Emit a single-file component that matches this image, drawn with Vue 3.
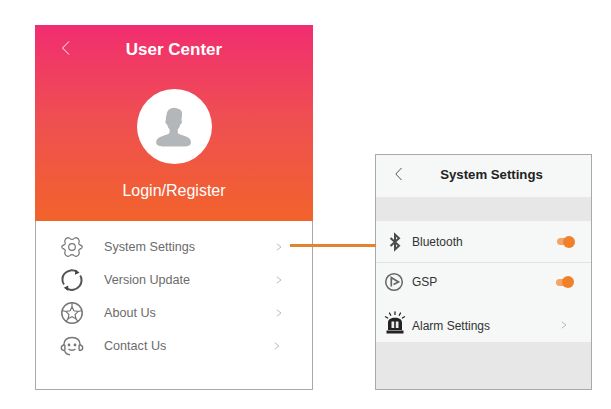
<template>
  <div class="page">
    <section class="user-panel">
      <header class="hero">
        <div class="hero-top">
          <svg class="back" width="11" height="16" viewBox="0 0 11 16"><path d="M9 1.500 2.500 8 9 14.500" /></svg>
          <span class="hero-title">User Center</span>
        </div>
        <div class="avatar">
          <svg width="36" height="40" viewBox="0 0 36 40">
            <path d="M10.500 9C10.500 3.500 14 .8 18.500.8c2.200 0 3 .9 4.300 1.200 2.700.7 3.500 3 3.200 6.500-.2 2-.3 3.300-.6 4.800.8.300.7 1.700.2 3-.4 1-.9 1-1.300 1.100-.6 2.200-1.500 3.800-2.500 5v3.100c0 1.300 3.700 2.500 7.500 3.800 3.200 1.100 5.700 2.900 5.700 6 0 3-2.500 4.100-6 4.100H6.500C3 39.400.2 38.300.2 35.300c0-3.100 2.600-4.900 5.800-6 3.800-1.300 7.600-2.500 7.600-3.800v-3.100c-1-1.200-1.900-2.800-2.500-5-.5-.1-1-.1-1.400-1.100-.5-1.300-.6-2.700.2-3-.2-1.300.1-2.900.1-4.300Z" />
          </svg>
        </div>
        <div class="login">Login/Register</div>
      </header>
      <ul class="menu">
        <li v-for="item in menu" :key="item.label" class="menu-row" :style="{ height: item.height + 'px' }">
          <svg class="menu-icon" width="24" height="24" viewBox="0 0 24 24" fill="none" stroke="#767676" stroke-width="1.200">
            <template v-if="item.icon === 'gear'">
              <path d="M7.800 2.600c1.300-.4 2.400 1.800 4.200 1.800s2.900-2.200 4.200-1.800c1.500.4 2.700 1.700 3 3.100.3 1.400-.9 2.100-.3 3.400.6 1.200 3.400 1.100 3.400 2.900s-2.800 1.700-3.400 2.900c-.6 1.300.6 2 .3 3.400-.3 1.400-1.500 2.700-3 3.100-1.300.4-2.400-1.800-4.200-1.800s-2.900 2.200-4.200 1.800c-1.500-.4-2.700-1.700-3-3.100-.3-1.400.9-2.100.3-3.400-.6-1.200-3.400-1.100-3.400-2.900s2.800-1.700 3.400-2.900c.6-1.300-.6-2-.3-3.400.3-1.400 1.500-2.700 3-3.100Z" />
              <circle cx="12" cy="12" r="3.300" />
            </template>
            <template v-else-if="item.icon === 'refresh'">
              <path stroke="#555" stroke-width="2" d="M17 3.800A10 10 0 0 0 4.500 5.600C2 8.300 1.600 13.300 4 16.500" />
              <path stroke="#555" stroke-width="2" d="M6.500 20.400a10 10 0 0 0 13-2.200c2.500-3 2.700-7.700.7-10.700" />
              <path fill="#444" stroke="none" d="m15.500 1.500 4 3.200-4.600 2.100ZM8 22.800l-4.200-3 4.500-2.300Z" />
            </template>
            <template v-else-if="item.icon === 'star'">
              <circle cx="12" cy="12" r="10.200" stroke-width="1.500" />
              <path d="m12 5.800 1.900 4 4.300.6-3.100 3 .8 4.300-3.900-2.100-3.900 2.100.8-4.300-3.100-3 4.300-.6Z" />
              <path d="M12 1.800v4M21.800 9.500l-3.600 1M17.900 20.300l-2-2.600M6.100 20.300l2-2.600M2.200 9.500l3.600 1" />
            </template>
            <template v-else>
              <path stroke-width="1.400" d="M3.800 11C4 6 7.500 3.500 12 3.500s8 2.500 8.200 7.500" />
              <path stroke-width="1.400" d="M3.800 11c-1.700.4-2.500 1.400-2.500 2.800s1 2.600 2.700 2.700c.7 0 .9-.5.9-1.100v-3.500c0-.7-.4-1.100-1.100-.9ZM20.200 11c1.700.4 2.500 1.400 2.500 2.800s-1 2.600-2.700 2.700c-.7 0-.9-.5-.9-1.100v-3.500c0-.7.400-1.100 1.100-.9Z" />
              <path stroke-width="1.400" d="M4.800 16.800c.5 2.400 2.600 3.700 5.200 3.900" />
              <circle cx="9" cy="11" r=".8" fill="#767676" />
              <circle cx="15" cy="11" r=".8" fill="#767676" />
              <path stroke-width="1.400" d="M8.500 15c1.800 1.700 5.200 1.700 7 0" />
            </template>
          </svg>
          <span class="menu-label">{{ item.label }}</span>
          <svg class="chevron" :class="{ 'shift-left': item.icon === 'headset' }" width="6" height="8" viewBox="0 0 6 8"><path d="M.8.8 5 4 .8 7.200" /></svg>
        </li>
      </ul>
    </section>

    <div class="connector"></div>

    <section class="settings-panel">
      <header class="settings-top">
        <svg class="back dark" width="10" height="14" viewBox="0 0 10 14"><path d="M7.500 1 1.800 7l5.700 6" /></svg>
        <span class="settings-title">System Settings</span>
      </header>
      <div class="band"></div>
      <div class="set-row first">
        <svg class="set-icon" width="22" height="22" viewBox="0 0 22 22" fill="none" stroke="#4b4b4b" stroke-width="2">
          <path d="M6.500 7 15 14.800 11 18.500V3.500L15 7.200 6.500 15" />
        </svg>
        <span class="set-label">Bluetooth</span>
        <span class="switch"></span>
      </div>
      <div class="set-row second">
        <svg class="set-icon" width="22" height="22" viewBox="0 0 22 22" fill="none" stroke="#666" stroke-width="1.500">
          <circle cx="10" cy="11" r="8.300" />
          <path stroke-width="1.700" d="M7.300 15.500v-9l7.200 4.500-5 2.500" />
        </svg>
        <span class="set-label">GSP</span>
        <span class="switch gsp"></span>
      </div>
      <div class="set-row third">
        <svg class="set-icon alarm-icon" width="22" height="24" viewBox="0 0 22 24">
          <path fill="#222" d="M4 11.500C4 8.300 7 6.700 11 6.700s7 1.600 7 4.800V19H4ZM2.500 19.500h17v3h-17Z" />
          <path fill="#eee" d="M7.500 10.500h2.700v6.500H7.500ZM11.800 10.500h2.700v6.500h-2.700Z" />
          <path fill="none" stroke="#222" stroke-width="1.300" stroke-linecap="round" d="M11 .8v2.600M5.500 2l1.200 2.200M16.500 2l-1.200 2.200M1.500 5.800l2.200 1.200M20.500 5.800 18.300 7" />
        </svg>
        <span class="set-label">Alarm Settings</span>
        <svg class="chevron alarm" width="6" height="8" viewBox="0 0 6 8"><path d="M.8.8 5 4 .8 7.200" /></svg>
      </div>
      <div class="footer-band"></div>
    </section>
  </div>
</template>

<script setup>
const menu = [
  { icon: 'gear', label: 'System Settings', height: 33 },
  { icon: 'refresh', label: 'Version Update', height: 33 },
  { icon: 'star', label: 'About Us', height: 34 },
  { icon: 'headset', label: 'Contact Us', height: 32 }
]
</script>

<style>
html, body {
  background: #fff;
}
</style>

<style scoped>
.page {
  position: relative;
  display: flex;
  align-items: flex-start;
  width: 611px;
  height: 409px;
  padding: 25px 0 0 35px;
  box-sizing: border-box;
  overflow: hidden;
  background: #fff;
  font-family: "Liberation Sans", Arial, sans-serif;
}

.user-panel {
  width: 278px;
  height: 365px;
  box-sizing: border-box;
  border: 1px solid #a9a9a9;
  border-top: 0;
  display: flex;
  flex-direction: column;
}

.hero {
  margin: 0 -1px;
  height: 196px;
  flex-shrink: 0;
  display: flex;
  flex-direction: column;
  align-items: center;
  background: linear-gradient(180deg, #f12d70 0%, #ef5050 50%, #f2632b 100%);
  color: #fff;
}

.hero-top {
  position: relative;
  width: 100%;
  height: 48px;
  padding-top: 2px;
  box-sizing: border-box;
  display: flex;
  align-items: center;
  justify-content: center;
}

.hero-title {
  font-size: 17px;
  font-weight: 700;
}

.back {
  position: absolute;
  left: 25px;
  top: 15px;
  fill: none;
  stroke: #fff;
  stroke-width: 1;
}

.back.dark {
  left: 18px;
  top: 12px;
  stroke: #555;
}

.avatar {
  width: 75px;
  height: 75px;
  margin-top: 16px;
  border-radius: 50%;
  background: #fff;
  display: flex;
  align-items: center;
  justify-content: center;
}

.avatar svg {
  fill: #b4b7ba;
}

.login {
  margin-top: 17px;
  font-size: 16px;
  line-height: 20px;
}

.menu {
  list-style: none;
  margin: 0;
  padding: 9px 0 0 24px;
}

.menu-row {
  display: flex;
  align-items: center;
}

.menu-icon {
  flex-shrink: 0;
}

.menu-label {
  margin-left: 20px;
  width: 172px;
  font-size: 12.600px;
  color: #6b6b6b;
}

.chevron {
  fill: none;
  stroke: #aaa;
  stroke-width: 0.800;
}

.chevron.shift-left {
  margin-left: -2px;
}

.connector {
  position: absolute;
  left: 290px;
  top: 244px;
  width: 86px;
  height: 3px;
  background: #e2842f;
}

.settings-panel {
  width: 217px;
  height: 236px;
  margin: 129px 0 0 62px;
  box-sizing: border-box;
  border: 1px solid #a9a9a9;
  background: #f6f7f7;
  display: flex;
  flex-direction: column;
}

.settings-top {
  position: relative;
  height: 42px;
  flex-shrink: 0;
  padding-bottom: 4px;
  box-sizing: border-box;
  display: flex;
  align-items: center;
  justify-content: center;
}

.settings-title {
  padding-left: 16px;
  font-size: 13.200px;
  font-weight: 700;
  color: #222;
}

.band {
  height: 24px;
  flex-shrink: 0;
  background: #e7e7e7;
}

.set-row {
  display: flex;
  align-items: center;
  padding-left: 8px;
  flex-shrink: 0;
}

.set-row.first {
  height: 41px;
  border-bottom: 1px solid #e0e3e3;
}

.set-row.second {
  height: 38px;
}

.set-row.third {
  height: 41px;
  padding-top: 9px;
  box-sizing: border-box;
}

.set-icon {
  flex-shrink: 0;
}

.alarm-icon {
  margin-bottom: 6px;
}

.set-label {
  margin-left: 6px;
  font-size: 12px;
  color: #333;
}

.switch {
  position: relative;
  width: 17px;
  height: 7px;
  margin-left: auto;
  margin-right: 17px;
  border-radius: 4px;
  background: #f3a468;
}

.switch.gsp {
  margin-right: 18px;
}

.switch::after {
  content: "";
  position: absolute;
  right: -1px;
  top: -2.500px;
  width: 12px;
  height: 12px;
  border-radius: 50%;
  background: #f0812a;
}

.chevron.alarm {
  margin-left: auto;
  margin-right: 24px;
  margin-bottom: 2px;
}

.footer-band {
  flex: 1;
  background: #e7e7e7;
}
</style>
